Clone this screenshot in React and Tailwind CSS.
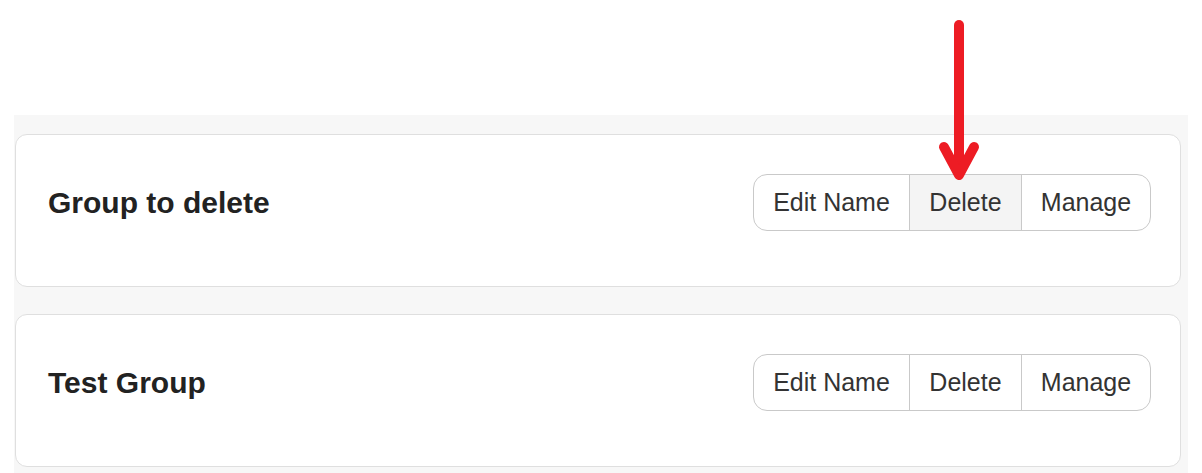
import React from 'react';

const groups = ['Group to delete', 'Test Group'];

const GroupCard = ({ name, hovered }) => {
    return (
        <div className="flex items-center justify-between h-[153px] pt-[40px] pb-[56px] pl-[32px] pr-[29px] bg-white border border-[#dfdfdf] rounded-[12px]">
            <h2 className="text-[30px] font-bold text-[#222] leading-none">{name}</h2>
            <div className="flex h-[57px] border border-[#c9c9c9] rounded-[14px] overflow-hidden text-[25px] text-[#333]">
                <button className="w-[155px] flex items-center justify-center">Edit Name</button>
                <button className={`w-[112px] flex items-center justify-center border-l border-[#c9c9c9] ${hovered ? 'bg-[#f4f4f4]' : 'bg-white'}`}>Delete</button>
                <button className="w-[129px] flex items-center justify-center border-l border-[#c9c9c9]">Manage</button>
            </div>
        </div>
    );
};

const App = () => {
    return (
        <div className="relative w-[1202px] h-[473px] bg-white overflow-hidden" style={{ fontFamily: '"Liberation Sans", Arial, sans-serif' }}>
            <div className="mt-[115px] ml-[14px] w-[1174px] h-[358px] bg-[#f7f7f7] pt-[19px] pl-[1px] pr-[7px] flex flex-col gap-[27px]">
                {groups.map((g, i) => (
                    <GroupCard key={g} name={g} hovered={i === 0} />
                ))}
            </div>
            {/* annotation arrow */}
            <svg className="absolute left-[930px] top-[10px]" width="60" height="180" viewBox="0 0 60 180">
                <g stroke="#ed1c24" strokeWidth="10" strokeLinecap="round" strokeLinejoin="round" fill="none">
                    <line x1="29" y1="15" x2="29" y2="163" />
                    <polyline points="14,137 29,165 44,137" />
                </g>
            </svg>
        </div>
    );
};

export default App;
